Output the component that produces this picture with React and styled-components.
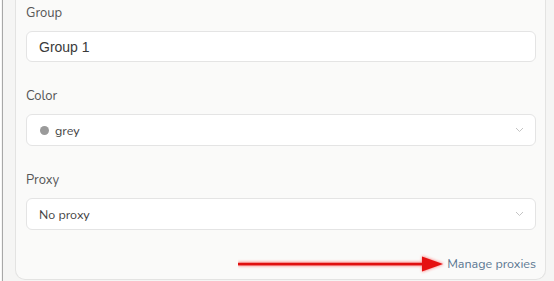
import React from "react";
import styled, { createGlobalStyle } from "styled-components";

const Global = createGlobalStyle`
  html, body { margin: 0; padding: 0; background: #f5f5f4; }
  * { box-sizing: border-box; }
`;

const fields = [
  { label: "Group", kind: "input", value: "Group 1" },
  { label: "Color", kind: "select", value: "grey", dot: "#9a9a9a" },
  { label: "Proxy", kind: "select", value: "No proxy" },
];

const Chevron = () => (
  <svg width="9" height="6" viewBox="0 0 9 6" fill="none">
    <path d="M1 1l3.5 3.5L8 1" stroke="#c4c4c4" strokeWidth="1" />
  </svg>
);

const Arrow = () => (
  <ArrowSvg width="212" height="24" viewBox="0 0 212 24">
    <defs>
      <filter id="glow" x="-10%" y="-100%" width="120%" height="300%">
        <feGaussianBlur stdDeviation="1.6" />
      </filter>
    </defs>
    <g filter="url(#glow)" opacity="0.55">
      <rect x="0" y="10" width="190" height="4" fill="#ff2020" />
      <path d="M184 4 L206 12 L184 20 Z" fill="#ff2020" />
    </g>
    <rect x="0" y="10.8" width="190" height="2.6" fill="#e01010" />
    <path d="M184 4.5 L205 12 L184 19.5 Z" fill="#e51010" />
  </ArrowSvg>
);

const App = () => {
  return (
    <Page>
      <Global />
      <Panel>
        {fields.map((f) => (
          <Field key={f.label}>
            <Label>{f.label}</Label>
            {f.kind === "input" ? (
              <TextBox>{f.value}</TextBox>
            ) : (
              <SelectBox>
                <SelectValue>
                  {f.dot && <Dot color={f.dot} />}
                  {f.value}
                </SelectValue>
                <Chevron />
              </SelectBox>
            )}
          </Field>
        ))}
        <Footer>
          <Arrow />
          <ManageLink>Manage proxies</ManageLink>
        </Footer>
      </Panel>
    </Page>
  );
};

const Page = styled.div`
  width: 554px;
  height: 281px;
  overflow: hidden;
  background: #f5f5f4;
  border-left: 1px solid #ffffff;
  padding-left: 14px;
  position: relative;
  &::before {
    content: "";
    position: absolute;
    left: 1px;
    top: 0;
    bottom: 0;
    width: 1px;
    background: #a8a8a8;
  }
`;

const Panel = styled.div`
  width: 531px;
  height: 280px;
  background: #fafaf9;
  border: 1px solid #e3e3e2;
  border-top: none;
  border-radius: 0 0 10px 10px;
  padding: 5px 9px 0 10px;
  font-family: "Nunito", Lato, "Noto Sans", sans-serif;
`;

const Field = styled.div`
  display: flex;
  flex-direction: column;
  gap: 10px;
  margin-bottom: 26px;
`;

const Label = styled.div`
  font-size: 13px;
  line-height: 16px;
  color: #555555;
`;

const boxBase = `
  background: #ffffff;
  border: 1px solid #e4e4e4;
  border-radius: 6px;
  display: flex;
  align-items: center;
`;

const TextBox = styled.div`
  ${boxBase}
  height: 31px;
  padding: 0 12px;
  font-family: "Liberation Sans", Arial, sans-serif;
  font-size: 14px;
  color: #3a3a3a;
`;

const SelectBox = styled.div`
  ${boxBase}
  height: 32px;
  justify-content: space-between;
  padding: 0 11px 0 12px;
`;

const SelectValue = styled.div`
  display: flex;
  align-items: center;
  gap: 6px;
  font-size: 12.5px;
  color: #444444;
`;

const Dot = styled.span`
  width: 9px;
  height: 9px;
  border-radius: 50%;
  background: ${(p) => p.color};
  margin-left: 1px;
`;

const Footer = styled.div`
  position: relative;
  display: flex;
  justify-content: flex-end;
  margin-top: 2px;
`;

const ManageLink = styled.a`
  font-size: 12.5px;
  line-height: 16px;
  color: #5b7791;
  cursor: pointer;
`;

const ArrowSvg = styled.svg`
  position: absolute;
  left: 212px;
  top: -4px;
`;

export default App;
